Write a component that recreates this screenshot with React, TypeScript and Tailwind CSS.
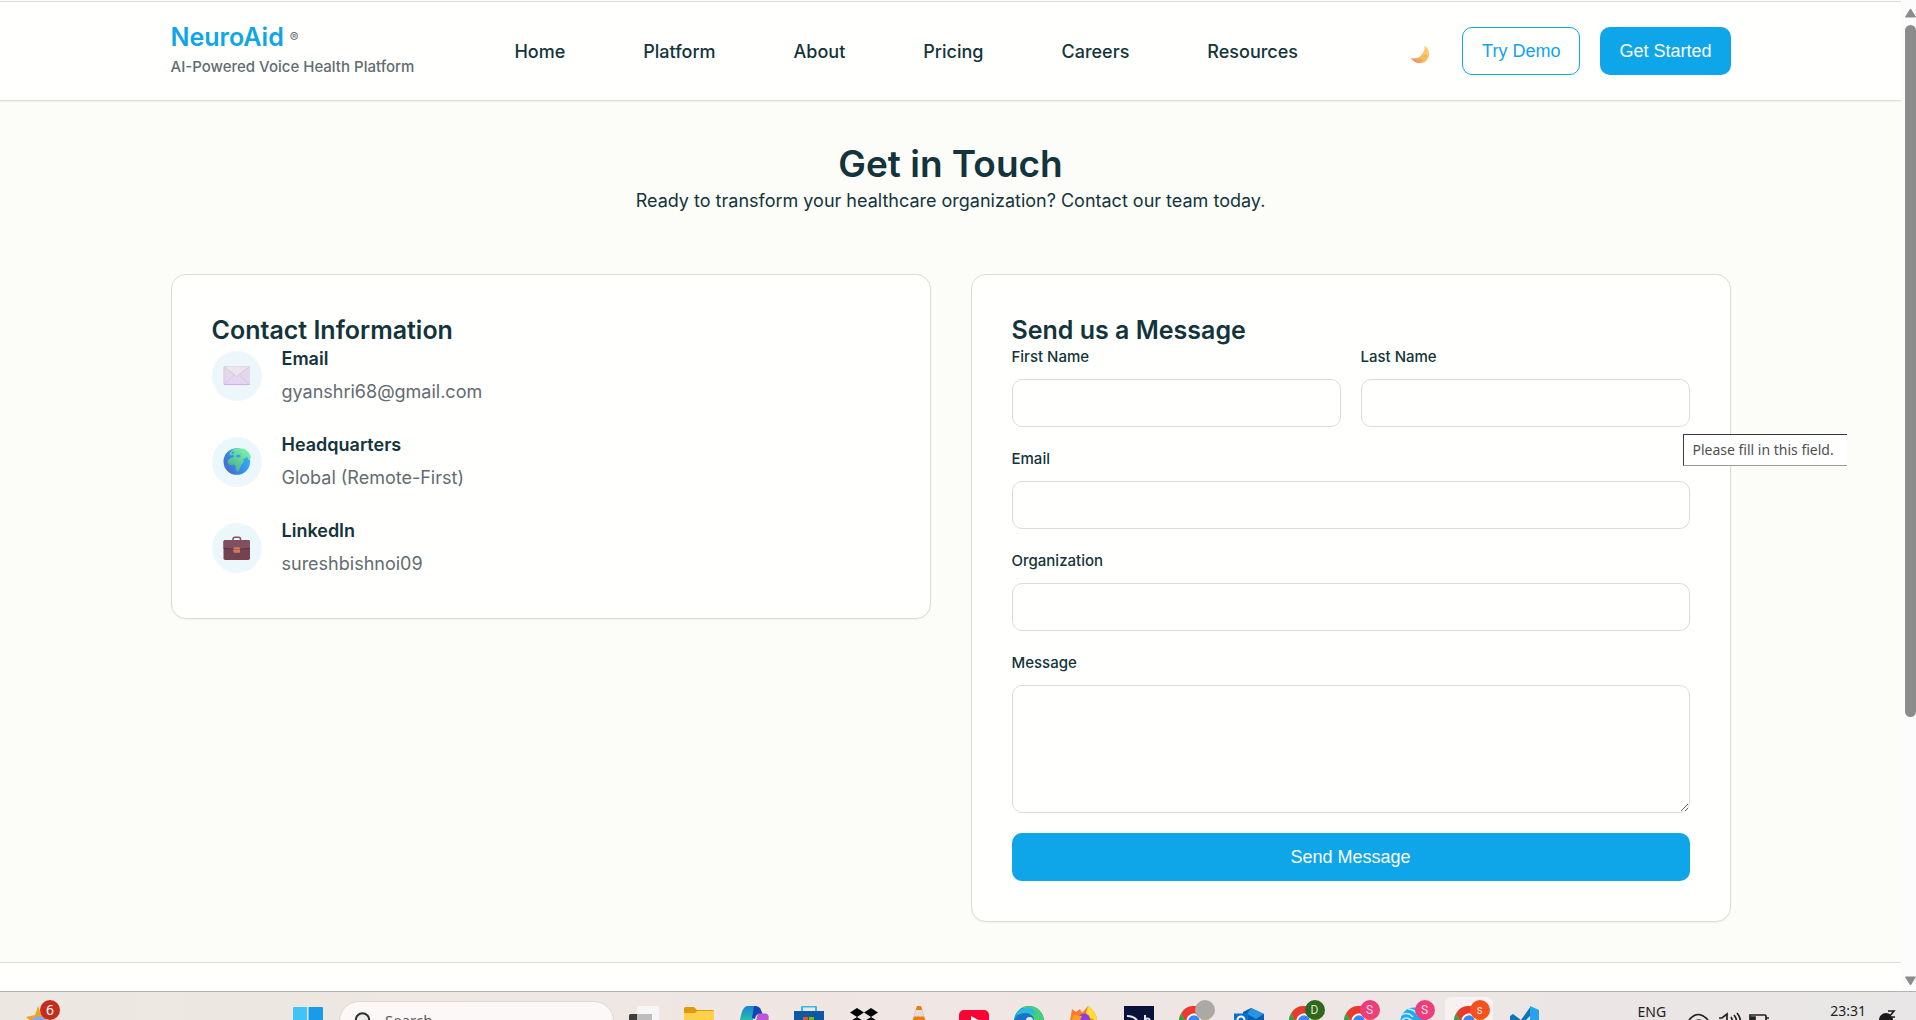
import type { ReactNode } from 'react';

const navLinks = ['Home', 'Platform', 'About', 'Pricing', 'Careers', 'Resources'];

const EnvelopeIcon = () => (
  <svg viewBox="0 0 28 28" className="h-7 w-7" aria-hidden="true">
    <defs>
      <linearGradient id="env" x1="0" y1="0" x2="0" y2="1">
        <stop offset="0" stopColor="#e3dbe6" />
        <stop offset="1" stopColor="#e6d3f6" />
      </linearGradient>
    </defs>
    <rect x="0.500" y="4" width="26.500" height="19" rx="1.500" fill="url(#env)" />
    <path d="M1.500 5l12 9.500L26 5" fill="#ece5ee" stroke="#d3bfdd" strokeWidth=".8" />
    <path d="M1.500 22l9.500-9M26 22L16.500 13" stroke="#d3bfdd" strokeWidth=".7" />
    <path d="M1 22.500h25.500" stroke="#d3aeee" />
    <path d="M1 5v17" stroke="#e2c3d6" strokeWidth=".8" />
  </svg>
);

const GlobeIcon = () => (
  <svg viewBox="0 0 28 28" className="h-7 w-7" aria-hidden="true">
    <defs>
      <linearGradient id="sea" x1="1" y1="0.300" x2="0" y2="0.900">
        <stop offset="0" stopColor="#2fb4fb" />
        <stop offset=".5" stopColor="#3a8be9" />
        <stop offset="1" stopColor="#4663c8" />
      </linearGradient>
      <linearGradient id="land" x1="1" y1="0" x2="0.200" y2="1">
        <stop offset="0" stopColor="#7dffb0" />
        <stop offset="1" stopColor="#4da98c" />
      </linearGradient>
    </defs>
    <circle cx="13.800" cy="13.500" r="13.300" fill="url(#sea)" />
    <path
      d="M10 1.500L6.500 5l.5 2.500 3-.5 1.500 1.500L7 10.500l-2 2c-.8 2 .5 4 2 4.500l4.500-.5 1.500 2.500-.5 2 2 3 2.500-3.500 1-3 3-4.500-1-2 2-.5 2-2 1 3 1 1 1-2 1 .3c-.3-5-3.500-9-8-10.300l-4.500.2-3.500-.2zM8.500 4.500l2-1 1 1.500-2 1zM13 7.500l3-1 2 1.500-1.500 1.500-3-.5z"
      fillRule="evenodd"
      fill="url(#land)"
    />
  </svg>
);

const BriefcaseIcon = () => (
  <svg viewBox="0 0 28 28" className="h-7 w-7" aria-hidden="true">
    <path d="M10 7V5.200C10 4 10.800 3.200 12 3.200h3.500c1.200 0 2 .8 2 2V7" fill="none" stroke="#7b5257" strokeWidth="1.500" />
    <rect x="0.500" y="6" width="26.500" height="20" rx="1.800" fill="#744352" />
    <path d="M.5 7.800C.5 6.800 1.300 6 2.300 6h23c1 0 1.700.8 1.700 1.800V14l-9 1.500H9.500L.5 14z" fill="#805060" />
    <path d="M.5 14.200c8 1.500 18.500 1.500 26.500 0" fill="none" stroke="#5f2c4c" />
    <rect x="10.500" y="13.200" width="6.500" height="5.500" rx=".8" fill="#d07b5d" />
    <path d="M10.500 15.500h6.500" stroke="#a95750" strokeWidth=".8" />
  </svg>
);

const MoonIcon = () => (
  <svg viewBox="0 0 20 20" className="h-5 w-5" aria-hidden="true">
    <defs>
      <linearGradient id="moon" x1="1" y1="0" x2="0" y2="1">
        <stop offset="0" stopColor="#ffd873" />
        <stop offset=".6" stopColor="#f7b660" />
        <stop offset="1" stopColor="#dc8060" />
      </linearGradient>
    </defs>
    <path d="M14.500 0.500c4.500 3 6 8.500 3.500 13-3 5.300-11.500 7.300-17.500-.5 3 .8 7 .8 10-2 3.500-3.500 4.300-6.500 4-10.500z" fill="url(#moon)" />
    <circle cx="15.500" cy="11" r="1.100" fill="#eaa252" />
    <circle cx="10.500" cy="15" r="1" fill="#e59a55" />
  </svg>
);

const contacts = [
  { icon: EnvelopeIcon, title: 'Email', value: 'gyanshri68@gmail.com' },
  { icon: GlobeIcon, title: 'Headquarters', value: 'Global (Remote-First)' },
  { icon: BriefcaseIcon, title: 'LinkedIn', value: 'sureshbishnoi09' }
];

function Navbar() {
  return (
    <header className="relative border-b border-[#dfdad6] bg-[#fffffe] shadow-xs">
      <div className="mx-auto flex h-[98px] max-w-[1560px] items-center justify-between">
        <div>
          <div className="flex items-center gap-[6px]">
            <span className="text-[25px] leading-7 font-semibold text-[#0ea5e9]">NeuroAid</span>
            <span className="text-[13px] leading-6 text-[#626c71]">®</span>
          </div>
          <p className="mt-1 text-[15px] leading-6 font-medium text-[#626c71]">AI-Powered Voice Health Platform</p>
        </div>
        <nav className="flex gap-[78px] pt-[2px]">
          {navLinks.map((link) => (
            <a key={link} href="#" className="text-lg font-medium">
              {link}
            </a>
          ))}
        </nav>
        <div className="flex items-center gap-5">
          <button type="button" aria-label="Toggle theme" className="px-3 pt-2">
            <MoonIcon />
          </button>
          <button type="button" className="h-12 rounded-[10px] border border-[#0ea5e9] px-[19px] font-['Liberation_Sans',sans-serif] text-lg text-[#0ea5e9]">
            Try Demo
          </button>
          <button type="button" className="h-12 rounded-[10px] bg-[#0ea5e9] px-[19px] font-['Liberation_Sans',sans-serif] text-lg text-[#fcfcf9]">
            Get Started
          </button>
        </div>
      </div>
    </header>
  );
}

function Card({ title, children }: { title: string; children: ReactNode }) {
  return (
    <section className="rounded-[15px] border border-[#dcdcd8] bg-[#fffffd] p-10 shadow-xs">
      <h3 className="text-[25px] leading-[30px] font-semibold">{title}</h3>
      {children}
    </section>
  );
}

function Field({ id, label }: { id: string; label: string }) {
  return (
    <div className="mb-5 flex flex-col gap-[11px]">
      <label htmlFor={id} className="text-[15px] leading-[23px] font-medium">
        {label}
      </label>
      <input id={id} type="text" className="h-12 w-full rounded-[10px] border border-[#dcdcd8] bg-[#fffffd] px-4 outline-none" />
    </div>
  );
}

function ContactForm() {
  return (
    <form>
      <div className="grid grid-cols-2 gap-5">
        <Field id="first" label="First Name" />
        <div className="relative">
          <Field id="last" label="Last Name" />
          <div
            role="tooltip"
            className="absolute top-[89px] left-full z-10 -ml-[7px] h-8 w-[164px] border-t border-b border-l border-t-[#3c3c3c] border-b-[#9a9a9a] border-l-[#3c3c3c] bg-white pl-[9px] font-['Noto_Sans',sans-serif] text-sm leading-[30px] whitespace-nowrap text-[#505050]"
          >
            Please fill in this field.
          </div>
        </div>
      </div>
      <Field id="email" label="Email" />
      <Field id="organization" label="Organization" />
      <div className="mb-5 flex flex-col gap-[11px]">
        <label htmlFor="message" className="text-[15px] leading-[23px] font-medium">
          Message
        </label>
        <textarea id="message" className="h-32 w-full rounded-[10px] border border-[#dcdcd8] bg-[#fffffd] px-4 py-3 outline-none" />
      </div>
      <button type="submit" className="h-12 w-full rounded-[10px] bg-[#0ea5e9] font-['Liberation_Sans',sans-serif] text-lg text-[#fcfcf9]">
        Send Message
      </button>
    </form>
  );
}

function Scrollbar() {
  return (
    <div className="flex w-[15px] shrink-0 flex-col items-end bg-[#fcfcfc] pt-2 pb-[5px]">
      <svg viewBox="0 0 11 10" className="h-[10px] w-[11px]">
        <path d="M5.500 1 10.500 9H.5z" fill="#8b8b8b" stroke="#8b8b8b" strokeLinejoin="round" />
      </svg>
      <div className="mt-[7px] mb-2 flex flex-1 flex-col">
        <div className="w-[11px] flex-[11] rounded-full bg-[#8b8b8b]" />
        <div className="flex-[4]" />
      </div>
      <svg viewBox="0 0 11 10" className="h-[10px] w-[11px]">
        <path d="M5.500 9 10.500 1H.5z" fill="#8b8b8b" stroke="#8b8b8b" strokeLinejoin="round" />
      </svg>
    </div>
  );
}

const ChromeArt = () => (
  <>
    <circle cx="15" cy="15" r="15" fill="#fbbc05" />
    <path d="M2 7.500A15 15 0 0 1 28 7.500H15A7.500 7.500 0 0 0 8.500 18.700z" fill="#ea3a30" />
    <path d="M2 7.500A15 15 0 0 0 15 30l6.500-11.300h-13z" fill="#2fa44f" />
    <circle cx="15" cy="15" r="7.500" fill="#fff" />
    <circle cx="15" cy="15" r="5.800" fill="#3f84f4" />
  </>
);

type App = { name: string; art: ReactNode; badge?: string; badgeClass?: string; active?: boolean };

const taskbarApps: App[] = [
  {
    name: 'Task view',
    art: (
      <>
        <rect y="8" width="23" height="20" rx="1.500" fill="#3d3d3d" />
        <rect x="8" width="22" height="20" rx="1.500" fill="#f6f6f6" />
        <path d="M8 8h15v12H8z" fill="#bdbdbd" />
      </>
    )
  },
  {
    name: 'File Explorer',
    art: (
      <>
        <path d="M0 2.500Q0 1 1.500 1H10l3 3h15.500Q30 4 30 5.500V10H0z" fill="#dd9a0a" />
        <path d="M0 8q0-1 1-1h10l2.500-2H30v22H0z" fill="#ffd04b" />
      </>
    )
  },
  {
    name: 'Copilot',
    art: (
      <>
        <defs>
          <linearGradient id="copilot" x1="0" y1="0" x2="0" y2="1">
            <stop offset="0" stopColor="#1683d8" />
            <stop offset=".6" stopColor="#25b5b0" />
            <stop offset="1" stopColor="#7cc65a" />
          </linearGradient>
        </defs>
        <path d="M6 1q1-1 3-1h9L12 20H0Q2 4 6 1z" fill="url(#copilot)" />
        <path d="M15 0q6 0 7 4l1.500 4H20q-3 0-4 5l-3-1z" fill="#1643b5" />
        <path d="M19 7.500h8q3.500 1 2.500 6l-3 12H14z" fill="#bd55d5" />
      </>
    )
  },
  {
    name: 'Store',
    art: (
      <>
        <path d="M8 6V1.500q0-1 1-1h12q1 0 1 1V6" fill="none" stroke="#35b7ef" strokeWidth="2" />
        <path d="M0 5h30v22H0z" fill="#0d58a0" />
        <path d="M9 11h5v5H9z" fill="#f25022" />
        <path d="M15 11h5v5h-5z" fill="#7fba00" />
      </>
    )
  },
  { name: 'Dropbox', art: <path d="M8 2l7 4.500L8 11 1 6.500zM22 2l7 4.500L22 11l-7-4.500zM8 11l7 4.500L8 20l-7-4.500zM22 11l7 4.500L22 20l-7-4.500z" fill="#000" /> },
  {
    name: 'VLC',
    art: (
      <>
        <path d="M13 0h4l8 26H5z" fill="#ee7a12" />
        <path d="M11.700 4h6.500l2 6.500H9.800z" fill="#dedede" />
      </>
    )
  },
  {
    name: 'YouTube',
    art: (
      <>
        <rect y="4" width="30" height="22" rx="5" fill="#fb0334" />
        <path d="M12 10l9 5-9 5z" fill="#fff" />
      </>
    )
  },
  {
    name: 'Edge',
    art: (
      <>
        <circle cx="15" cy="15" r="15" fill="#179bd8" />
        <path d="M9 1.300C19-2.500 30 4 30 16H17z" fill="#48cf78" />
        <path d="M2 8.500C8-1 20 0 22 8z" fill="#2bb9dc" />
        <path d="M0 15q3-8 12-8 8 1 8 8-3-2-7 0l-2 14Q1 27 0 15z" fill="#1574c6" />
        <circle cx="15.500" cy="14.500" r="3.500" fill="#eee9e7" />
      </>
    )
  },
  {
    name: 'Firefox',
    art: (
      <>
        <path d="M19 0c5 4 9 8 9 15q0 14-13 14Q1 28 1 15L3 3l4 3 4-3 2 4z" fill="#fb7b26" />
        <path d="M19 0c5 4 9 8 9 15l-7-3-4-5z" fill="#fede35" />
        <circle cx="15" cy="13.500" r="6" fill="#8d3cdf" />
        <path d="M5 9l8 1-3 6-8-1z" fill="#ff9e28" />
      </>
    )
  },
  {
    name: 'Data tool',
    art: (
      <>
        <path d="M0 0h30v30H0z" fill="#08123a" />
        <path d="M3 10q9 0 12 8M21 9v8M21 13q5-2 5 3" fill="none" stroke="#e5e8f0" strokeWidth="2" />
      </>
    )
  },
  { name: 'Chrome', art: <ChromeArt />, badge: ' ', badgeClass: 'bg-[#aaa9a6]' },
  {
    name: 'Outlook',
    art: (
      <>
        <path d="M9 6l8-4 13 6v20H9z" fill="#0b5cb3" />
        <path d="M17 2l13 6-8 5-9-5z" fill="#2594e2" />
        <rect y="7.500" width="14" height="16" fill="#0a70cd" />
        <circle cx="7" cy="14" r="3.500" fill="none" stroke="#fff" strokeWidth="2" />
      </>
    )
  },
  { name: 'Chrome, profile D', art: <ChromeArt />, badge: 'D', badgeClass: 'bg-[#2f681d]' },
  { name: 'Chrome, profile S', art: <ChromeArt />, badge: 'S', badgeClass: 'bg-[#ea3f7c]' },
  {
    name: 'Browser, profile S',
    art: (
      <>
        <circle cx="15" cy="15" r="13.500" fill="#1ca9f5" />
        <path d="M2 9q7-4 12 2M3 14q6-5 12 3M9 3q7 0 10 7" fill="none" stroke="#c8ecfd" strokeWidth="1.500" />
      </>
    ),
    badge: 'S',
    badgeClass: 'bg-[#ea3f7c]'
  },
  { name: 'Chrome, second profile', art: <ChromeArt />, badge: 's', badgeClass: 'bg-[#f4511e]', active: true },
  {
    name: 'Code editor',
    art: (
      <>
        <path d="M1 10l3-2 8 6L22 0v9L6 25l-5-4z" fill="#0a75bd" />
        <path d="M21 0l9 4v26l-9-3z" fill="#27a3ee" />
      </>
    )
  }
];

function TaskbarApp({ app }: { app: App }) {
  return (
    <div className="flex w-[55px] justify-center">
      <button
        type="button"
        aria-label={app.name}
        className={app.active ? 'relative mt-[5px] flex h-12 w-12 justify-center rounded-md bg-[#f7f2f1] pt-[9px]' : 'relative flex h-12 w-12 justify-center pt-[14px]'}
      >
        <svg viewBox="0 0 30 30" className="h-[30px] w-[30px]">
          {app.art}
        </svg>
        {app.badge && (
          <span className={`absolute left-[25px] ${app.active ? 'top-[3px]' : 'top-2'} h-5 w-5 rounded-full text-center font-['Roboto',sans-serif] text-xs leading-5 text-[#ffffffd0] ${app.badgeClass}`}>
            {app.badge}
          </span>
        )}
      </button>
    </div>
  );
}

function Taskbar() {
  return (
    <footer className="flex h-[29px] shrink-0 items-start justify-between overflow-hidden border-t border-[#b6b3b1] bg-linear-to-r from-[#ece8e1] via-[#f0e6e3] to-[#e8e6e6] font-['Noto_Sans',sans-serif] text-[#1f1f1f]">
      <button type="button" aria-label="Weather" className="relative ml-6 h-10 w-[269px]">
        <svg viewBox="0 0 36 36" className="mt-[14px] h-9 w-9">
          <path d="M14 0l3 8 6 4-4 14L2 11l9-2z" fill="#eda621" />
          <circle cx="15" cy="19" r="9" fill="#8da5e5" />
        </svg>
        <span className="absolute top-2 left-4 h-5 w-5 rounded-full bg-[#c42b1c] text-center text-sm leading-5 text-white">6</span>
      </button>
      <div className="flex flex-1 items-start">
        <button type="button" aria-label="Start" className="pt-[14px]">
          <svg viewBox="0 0 30 30" className="h-[30px] w-[30px]">
            <path d="M0 2q0-1 1-1h13v14H0z" fill="#40c3f7" />
            <path d="M15.500 1H29q1 0 1 1v13H15.500z" fill="#189be9" />
          </svg>
        </button>
        <div className="mt-[9px] ml-4 flex h-10 w-[275px] items-start rounded-full border border-[#ded8d4] bg-[#fbf8f7] pl-[14px]">
          <svg viewBox="0 0 18 22" className="mt-[10px] h-[22px] w-[18px]">
            <circle cx="8.500" cy="8" r="6.700" fill="#eceaea" stroke="#303030" strokeWidth="2" />
          </svg>
          <input aria-label="Search" placeholder="Search" className="mt-[6px] ml-[13px] w-40 bg-transparent text-[15px] leading-6 outline-none placeholder:text-[#5c5c5c]" />
        </div>
        <div className="ml-[2px] flex">
          {taskbarApps.map((app) => (
            <TaskbarApp key={app.name} app={app} />
          ))}
        </div>
      </div>
      <div className="flex items-start pr-5 text-sm leading-5">
        <span className="mt-[10px]">ENG</span>
        <svg viewBox="0 0 82 20" className="mt-5 ml-[22px] h-5 w-[82px]" fill="none" stroke="#222" strokeWidth="1.700">
          <path d="M1 8q9-11 19 0M5 11q6-6 11 0M31 6h3l5-4v16M43 5q2 3 1 8M46 3q4 5 2 11M49 1q5 6 3 14M62 3h15q1 0 1 2v5h-16zM78 6h3" />
          <path d="M63 5h4v8h-4z" fill="#222" />
        </svg>
        <time className="mt-[9px] ml-[60px]">23:31</time>
        <svg viewBox="0 0 18 20" className="mt-[18px] ml-3 h-5 w-[18px]">
          <circle cx="8" cy="10" r="7" fill="#1b1b1b" />
          <path d="M10 1h6l-5 6h6" stroke="#1b1b1b" strokeWidth="1.600" fill="#eceaea" />
        </svg>
      </div>
    </footer>
  );
}

export default function App() {
  return (
    <div className="flex h-screen flex-col overflow-hidden bg-[#fcfcf9] font-['Inter',sans-serif] text-[#13343b]">
      <div className="flex min-h-0 flex-1">
        <div className="flex min-w-0 flex-1 flex-col overflow-hidden">
          <div className="mt-px h-px shrink-0 bg-[#dcdcd2]" />
          <Navbar />
          <main className="mx-auto w-full max-w-[1560px] shrink-0 pt-10 pb-10">
            <div className="mb-[60px] text-center">
              <h2 className="text-[37px] leading-[46px] font-semibold">Get in Touch</h2>
              <p className="text-lg leading-[27px]">Ready to transform your healthcare organization? Contact our team today.</p>
            </div>
            <div className="grid grid-cols-2 items-start gap-10">
              <Card title="Contact Information">
                <div className="mt-[6px] flex flex-col gap-[31px]">
                  {contacts.map((contact) => (
                    <div key={contact.title} className="flex gap-5">
                      <div className="flex h-[50px] w-[50px] items-center justify-center rounded-full bg-[#ecf7fc]">
                        <contact.icon />
                      </div>
                      <div>
                        <h4 className="text-lg leading-4 font-semibold">{contact.title}</h4>
                        <p className="mt-[11px] text-lg leading-7 text-[#626c71]">{contact.value}</p>
                      </div>
                    </div>
                  ))}
                </div>
              </Card>
              <Card title="Send us a Message">
                <ContactForm />
              </Card>
            </div>
          </main>
          <div className="flex-1 border-t border-[#dcdcd8] bg-[#fffffe]" />
        </div>
        <Scrollbar />
      </div>
      <Taskbar />
    </div>
  );
}
